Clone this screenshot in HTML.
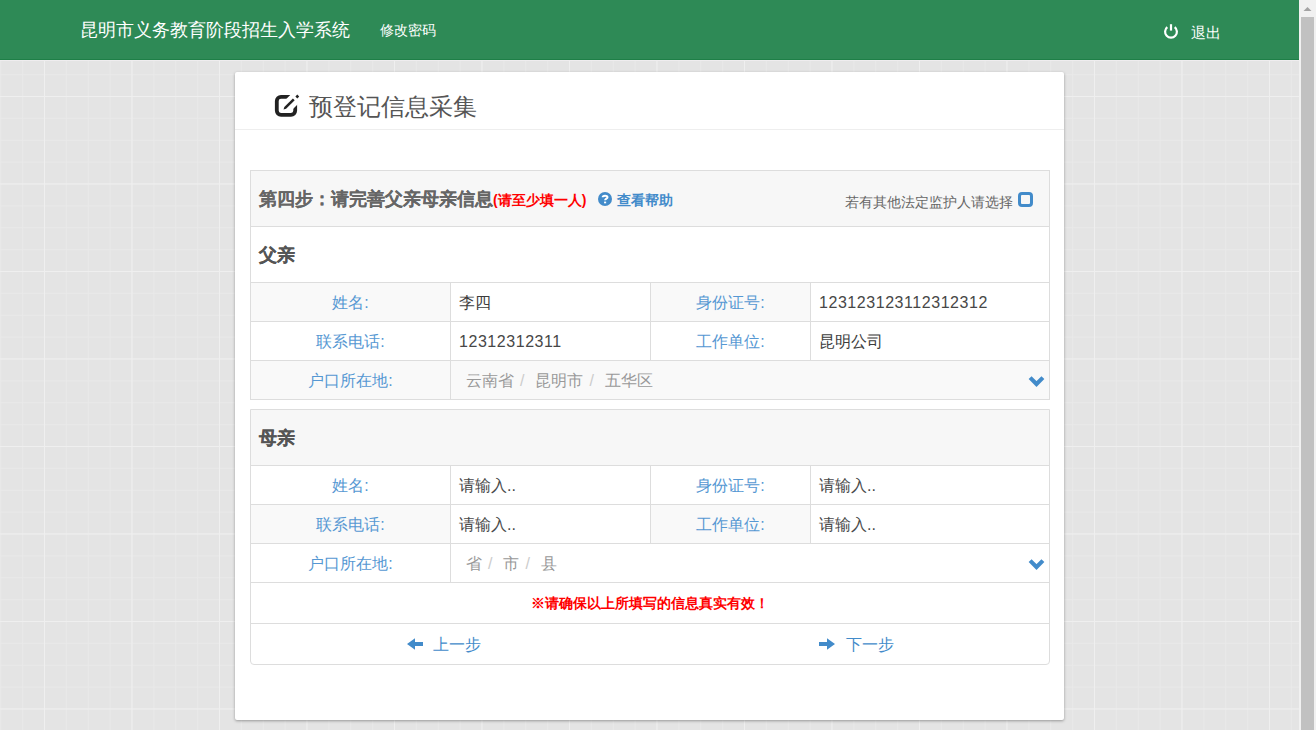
<!DOCTYPE html>
<html><head><meta charset="utf-8">
<style>
*{box-sizing:border-box;margin:0;padding:0}
html,body{width:1316px;height:730px;overflow:hidden}
body{font-family:"Liberation Sans",sans-serif;position:relative;background:#e4e4e4}
.abs{position:absolute}
#bg{left:0;top:60px;width:1299px;height:670px;background-color:#e4e4e4;
 background-image:
  linear-gradient(to right,#efefef 1px,transparent 1px),
  linear-gradient(to bottom,#efefef 1px,transparent 1px),
  linear-gradient(to right,#e9e9e9 1px,transparent 1px),
  linear-gradient(to bottom,#e9e9e9 1px,transparent 1px);
 background-size:87.5px 87.5px,87.5px 87.5px,21.875px 21.875px,21.875px 21.875px;
 background-position:44px 36px,44px 36px,44px 36px,44px 36px}
#hdr{left:0;top:0;width:1299px;height:60px;background:#2e8a56;border-bottom:1px solid #1e7f47}
#hline{left:0;top:60px;width:1299px;height:1px;background:#efedef}
#sb{left:1299px;top:0;width:17px;height:730px;background:#f1f1f1}
#thumb{left:1301px;top:17px;width:13px;height:713px;background:#c1c1c1}
.t1{color:#fff;font-size:18px;left:80px;top:18px;white-space:nowrap}
.t2{color:#fff;font-size:14px;left:380px;top:22px;white-space:nowrap}
.t3{color:#fff;font-size:15px;left:1191px;top:24px;white-space:nowrap}
#card{left:235px;top:72px;width:829px;height:648px;background:#fff;border-radius:2px;box-shadow:0 1px 3px rgba(0,0,0,.35)}
#cardline{left:235px;top:129px;width:829px;height:1px;background:#eee}
.ttl{left:309px;top:91px;font-size:24px;color:#555;white-space:nowrap;font-weight:300}
.p1{left:250px;top:170px;width:800px;height:230px;border:1px solid #ddd}
.p2{left:250px;top:409px;width:800px;height:256px;border:1px solid #ddd;border-radius:0 0 4px 4px;overflow:hidden}
.hd{left:0;top:0;width:798px;height:56px;background:#f7f7f7;border-bottom:1px solid #ddd}
.row{position:absolute;left:0;width:798px;height:39px;border-bottom:1px solid #ddd}
.row.g{background:#f9f9f9}
.c{position:absolute;top:0;height:38px;border-right:1px solid #ddd}
.lab{color:#5698d3;font-size:16px;text-align:center;line-height:40px;font-weight:300}
.val{color:#3d3d3d;font-size:16px;line-height:40px;padding-left:8px;background:#fff}
.sec{position:absolute;left:0;width:798px;height:56px;border-bottom:1px solid #ddd}
.sect{position:absolute;left:8px;top:16px;font-size:18px;font-weight:bold;color:#555;-webkit-text-stroke:0.2px #555}
.step{left:8px;top:16px;font-size:18px;font-weight:bold;color:#666;-webkit-text-stroke:0.1px #666;white-space:nowrap}
.red{color:#f00;font-size:14px;-webkit-text-stroke:0}
.help{left:366px;top:21px;font-size:14px;color:#428bca;font-weight:bold;white-space:nowrap}
.other{left:594px;top:23px;font-size:14px;color:#666;white-space:nowrap}
.chk{left:767px;top:21px;width:15px;height:15px;border:3px solid #428bca;border-radius:4px}
.casc{position:absolute;top:0;line-height:40px;font-size:16px;color:#999;white-space:nowrap}
.sl{color:#ccc;margin:0 11px 0 6px}
.notice{text-align:center;color:#f00;font-weight:bold;font-size:14px;line-height:40px}
.nav{top:11px;font-size:16px;color:#428bca;white-space:nowrap}
.ph{color:#4a4a4a}
.num{letter-spacing:0.55px;color:#474747}
</style></head><body>
<div id="bg" class="abs"></div>
<div id="hdr" class="abs"></div>
<div id="hline" class="abs"></div>
<div class="abs t1">昆明市义务教育阶段招生入学系统</div>
<div class="abs t2">修改密码</div>
<div class="abs t3">退出</div>
<div id="sb" class="abs"></div>
<div id="thumb" class="abs"></div>
<svg class="abs" style="left:1299px;top:0" width="17" height="17" viewBox="0 0 17 17"><polygon points="4.5,11 8.5,7 12.5,11" fill="#a3a3a3"/></svg>

<div id="card" class="abs"></div>
<div id="cardline" class="abs"></div>
<div class="abs ttl">预登记信息采集</div>

<div class="abs p1">
  <div class="abs hd">
    <div class="abs step">第四步：请完善父亲母亲信息<span class="red">(请至少填一人)</span></div>
    <svg class="abs" style="left:347px;top:21px" width="14" height="14" viewBox="0 0 14 14"><circle cx="7" cy="7" r="7" fill="#428bca"/><path d="M4.7 5.3 C4.7 3.4 9.5 3.2 9.5 5.3 C9.5 6.6 7.1 6.7 7.1 8.2" fill="none" stroke="#fff" stroke-width="2"/><rect x="6.05" y="9.6" width="2.1" height="1.7" fill="#fff"/></svg>
    <div class="abs help">查看帮助</div>
    <div class="abs other">若有其他法定监护人请选择</div>
    <div class="abs chk"></div>
  </div>
  <div class="sec" style="top:56px;background:#fff"><div class="sect">父亲</div></div>
  <div class="row g" style="top:112px">
    <div class="c lab" style="left:0;width:200px">姓名:</div>
    <div class="c val" style="left:200px;width:200px">李四</div>
    <div class="c lab" style="left:400px;width:160px">身份证号:</div>
    <div class="c val" style="left:560px;width:238px;border-right:0"><span class="num">123123123112312312</span></div>
  </div>
  <div class="row" style="top:151px">
    <div class="c lab" style="left:0;width:200px">联系电话:</div>
    <div class="c val" style="left:200px;width:200px"><span class="num">12312312311</span></div>
    <div class="c lab" style="left:400px;width:160px">工作单位:</div>
    <div class="c val" style="left:560px;width:238px;border-right:0">昆明公司</div>
  </div>
  <div class="row g" style="top:190px;border-bottom:0;height:38px">
    <div class="c lab" style="left:0;width:200px">户口所在地:</div>
    <div class="casc" style="left:215px">云南省<span class="sl">/</span>昆明市<span class="sl">/</span>五华区</div>
    <svg class="abs" style="left:777px;top:14px" width="17" height="13" viewBox="0 0 17 13"><path d="M2.1 2.6 L8.5 9 L14.9 2.6" fill="none" stroke="#428bca" stroke-width="4.1"/></svg>
  </div>
</div>

<div class="abs p2">
  <div class="sec" style="top:0;background:#f7f7f7"><div class="sect">母亲</div></div>
  <div class="row" style="top:56px">
    <div class="c lab" style="left:0;width:200px">姓名:</div>
    <div class="c val" style="left:200px;width:200px"><span class="ph">请输入..</span></div>
    <div class="c lab" style="left:400px;width:160px">身份证号:</div>
    <div class="c val" style="left:560px;width:238px;border-right:0"><span class="ph">请输入..</span></div>
  </div>
  <div class="row g" style="top:95px">
    <div class="c lab" style="left:0;width:200px">联系电话:</div>
    <div class="c val" style="left:200px;width:200px"><span class="ph">请输入..</span></div>
    <div class="c lab" style="left:400px;width:160px">工作单位:</div>
    <div class="c val" style="left:560px;width:238px;border-right:0"><span class="ph">请输入..</span></div>
  </div>
  <div class="row" style="top:134px">
    <div class="c lab" style="left:0;width:200px">户口所在地:</div>
    <div class="casc" style="left:215px">省<span class="sl">/</span>市<span class="sl">/</span>县</div>
    <svg class="abs" style="left:777px;top:14px" width="17" height="13" viewBox="0 0 17 13"><path d="M2.1 2.6 L8.5 9 L14.9 2.6" fill="none" stroke="#428bca" stroke-width="4.1"/></svg>
  </div>
  <div class="row" style="top:173px;height:41px"><div class="notice">※请确保以上所填写的信息真实有效！</div></div>
  <div class="row" style="top:214px;height:40px;border-bottom:0">
    <svg class="abs" style="left:156px;top:14px" width="16" height="12" viewBox="0 0 16 12"><path d="M0 6 L8 0.2 V3.9 H16 V8.1 H8 V11.8 Z" fill="#428bca"/></svg>
    <div class="abs nav" style="left:182px">上一步</div>
    <svg class="abs" style="left:568px;top:14px" width="16" height="12" viewBox="0 0 16 12"><path d="M16 6 L8 0.2 V3.9 H0 V8.1 H8 V11.8 Z" fill="#428bca"/></svg>
    <div class="abs nav" style="left:595px">下一步</div>
  </div>
</div>
<svg class="abs" style="left:1163px;top:23px" width="16" height="16" viewBox="0 0 16 16"><path d="M4.3 4.2 A5.9 5.9 0 1 0 11.7 4.2" fill="none" stroke="#fff" stroke-width="2.2"/><path d="M8 1.2 V7.6" stroke="#fff" stroke-width="2.2"/></svg>
<svg class="abs" style="left:271px;top:91px" width="32" height="30" viewBox="0 0 32 30"><rect x="5.8" y="5.8" width="18.4" height="18" rx="4.2" fill="none" stroke="#222" stroke-width="3.8"/><polygon points="23.3,0 32,0 32,8 22,18 12,18 12,11.3" fill="#fff"/><polygon points="12.5,18.5 13.3,15.9 21.9,7.4 23.7,9.2 15.1,17.7" fill="#222"/><polygon points="26.3,3.4 28.2,5.4 26.3,7.4 24.4,5.4" fill="#222"/></svg>
</body></html>
